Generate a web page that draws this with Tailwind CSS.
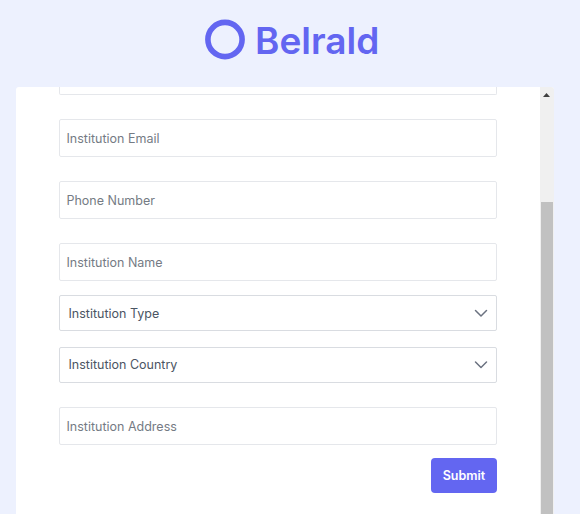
<!DOCTYPE html>
<html lang="en">
<head>
  <meta charset="UTF-8" />
  <meta name="viewport" content="width=device-width, initial-scale=1.0" />
  <title>Belrald</title>
  <script src="https://cdn.jsdelivr.net/npm/@tailwindcss/browser@4"></script>
</head>
<body class="h-screen overflow-hidden bg-[#edf1fe] font-['Inter',sans-serif] text-[12.5px] flex flex-col">
  <!-- Logo -->
  <header class="h-[86.500px] shrink-0 flex items-start pl-[205px] pt-[19px] gap-[10px]">
    <svg class="w-10 h-[41px]" viewBox="0 0 40 41" fill="none">
      <circle cx="20" cy="20.5" r="17.1" stroke="#6366f1" stroke-width="5.6" />
    </svg>
    <h1 class="text-[37px] leading-[44px] font-semibold text-[#6366f1]">Belrald</h1>
  </header>

  <main class="flex-1 min-h-0 flex ml-[16.4px] w-[537.2px] rounded-t-[3px] overflow-hidden bg-white">
    <form class="w-[523.600px] pl-[42.600px] pr-[43px] flex flex-col shrink-0">
      <div class="h-[8.500px] shrink-0 border border-t-0 border-[#e5e7eb] rounded-b-[2px]"></div>
      <input type="email" placeholder="Institution Email" class="mt-6 h-[38px] shrink-0 border border-[#e5e7eb] rounded-[2px] px-[6.5px] placeholder:text-[#757b84]" />
      <input type="text" placeholder="Phone Number" class="mt-6 h-[38px] shrink-0 border border-[#e5e7eb] rounded-[2px] px-[6.5px] placeholder:text-[#757b84]" />
      <input type="text" placeholder="Institution Name" class="mt-6 h-[38px] shrink-0 border border-[#e5e7eb] rounded-[2px] px-[6.5px] placeholder:text-[#757b84]" />
      <button type="button" class="mt-[14px] h-9 shrink-0 flex items-center justify-between border border-[#d9dce1] rounded-[2px] pl-[8.5px] pr-2 text-[#4b5563]">
        <span class="pt-0.5">Institution Type</span>
        <svg class="w-[14px] h-[14px]" viewBox="0 0 14 14" fill="none" stroke="#6b7280" stroke-width="1.5" stroke-linecap="round" stroke-linejoin="round">
          <path d="M1.5 4.5 7 10l5.500-5.500" />
        </svg>
      </button>
      <button type="button" class="mt-4 h-9 shrink-0 flex items-center justify-between border border-[#d9dce1] rounded-[2px] pl-[8.5px] pr-2 text-[#4b5563]">
        <span>Institution Country</span>
        <svg class="w-[14px] h-[14px]" viewBox="0 0 14 14" fill="none" stroke="#6b7280" stroke-width="1.5" stroke-linecap="round" stroke-linejoin="round">
          <path d="M1.5 4 7 9.500l5.500-5.500" />
        </svg>
      </button>
      <input type="text" placeholder="Institution Address" class="mt-6 h-[38px] shrink-0 border border-[#e5e7eb] rounded-[2px] px-[6.5px] placeholder:text-[#757b84]" />
      <button type="submit" class="mt-[13px] self-end w-[66px] h-[35px] shrink-0 rounded-[4px] bg-[#6366f1] text-white font-semibold pt-0.5">Submit</button>
    </form>

    <!-- Scrollbar -->
    <div class="w-[14px] bg-[#f0f0f0] flex flex-col items-center">
      <svg class="w-[7px] h-[4px] mt-[6px] shrink-0" viewBox="0 0 7 4" fill="#404040">
        <path d="M3.500 0 7 4H0z" />
      </svg>
      <div class="mt-[105px] w-3 flex-1 bg-[#c1c1c1]"></div>
    </div>
  </main>
</body>
</html>
